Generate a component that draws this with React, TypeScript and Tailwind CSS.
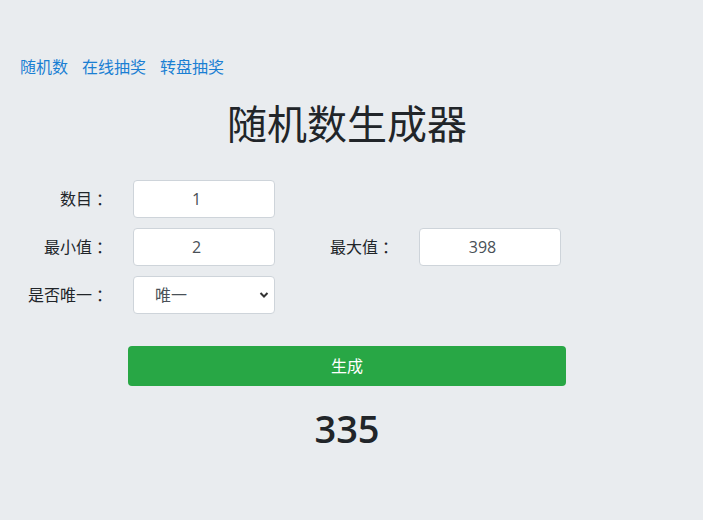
import React from "react";

const font = { fontFamily: '"Open Sans", "Noto Sans CJK SC", sans-serif' };
const colonFont = { fontFamily: '"Noto Sans CJK JP", "Noto Sans CJK SC", sans-serif' };

function Label({ text }: { text: string }) {
  return (
    <label className="w-[108px] mr-[25px] flex justify-end items-center text-[16px] leading-[16px] text-[#212529]">
      <span>{text}</span>
      <span style={colonFont}>：</span>
    </label>
  );
}

function Field({ label, value }: { label: string; value: string }) {
  return (
    <div className="flex items-center">
      <Label text={label} />
      <input
        readOnly
        value={value}
        className="w-[142px] h-[38px] rounded-[4px] border border-[#ced4da] bg-white text-center pr-[15px] text-[16px] text-[#495057] outline-none"
        style={font}
      />
    </div>
  );
}

export default function App() {
  return (
    <div className="min-h-[520px] w-full bg-[#e9ecef] pt-[55px]" style={font}>
      <nav className="flex gap-[14px] pl-[20px] text-[16px] leading-[24px]">
        <a className="text-[#1a7fd3]">随机数</a>
        <a className="text-[#1a7fd3]">在线抽奖</a>
        <a className="text-[#1a7fd3]">转盘抽奖</a>
      </nav>
      <h1 className="mt-[21px] w-[694px] text-center text-[40px] leading-[48px] text-[#212529]">随机数生成器</h1>
      <div className="mt-[32px] flex flex-col gap-[10px]">
        <Field label="数目" value="1" />
        <div className="flex items-center gap-[11px]">
          <Field label="最小值" value="2" />
          <Field label="最大值" value="398" />
        </div>
        <div className="flex items-center">
          <Label text="是否唯一" />
          <div className="relative w-[142px] h-[38px] rounded-[4px] border border-[#ced4da] bg-white flex items-center pl-[21px] text-[16px] text-[#495057]">
            <span>唯一</span>
            <svg className="absolute right-[5px] top-[14px]" width="10" height="8" viewBox="0 0 10 8">
              <path d="M1.5 2 L5 5.5 L8.5 2" fill="none" stroke="#333" strokeWidth="2" />
            </svg>
          </div>
        </div>
      </div>
      <div className="mt-[32px] pl-[128px]">
        <button className="w-[438px] h-[40px] rounded-[4px] bg-[#28a745] text-white text-[16px]" style={font}>生成</button>
      </div>
      <div className="mt-[16px] w-[694px] text-center text-[38px] leading-[52px] font-semibold text-[#212529]">335</div>
    </div>
  );
}
